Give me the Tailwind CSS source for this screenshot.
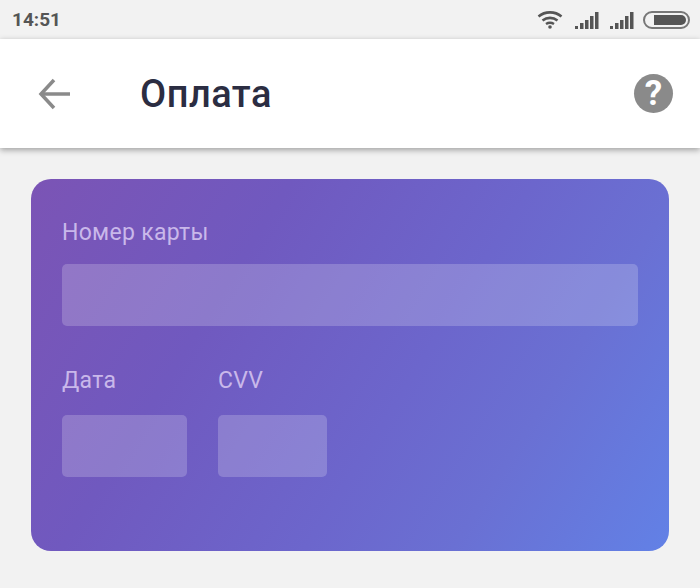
<!DOCTYPE html>
<html lang="ru">
<head>
    <meta charset="UTF-8">
    <title>Оплата</title>
    <script src="https://cdn.jsdelivr.net/npm/@tailwindcss/browser@4"></script>
</head>
<body class="bg-[#f2f2f2] font-['Roboto',sans-serif] w-[700px] h-[588px] overflow-hidden">
    <!-- status bar -->
    <div class="h-[39px] flex items-center justify-between pl-3 pr-[10px] text-[#555]">
        <span class="text-[19px] font-bold leading-none">14:51</span>
        <div class="flex items-center">
            <svg width="26" height="19" viewBox="0 0 26 19" fill="none" stroke="#555" stroke-width="2.6" class="mr-[12px]">
                <path d="M1.5 6.5C8 1 18 1 24.5 6.5"/>
                <path d="M5.5 10.5C10 7 16 7 20.5 10.5"/>
                <path d="M9 14C11.5 12.5 14.5 12.5 17 14"/>
                <circle cx="13" cy="17" r="1.8" fill="#555" stroke="none"/>
            </svg>
            <svg width="24" height="18" viewBox="0 0 24 18" fill="#555" class="mr-[11px]">
                <rect x="0" y="15" width="3" height="3"/>
                <rect x="5" y="12" width="3.5" height="6"/>
                <rect x="10" y="9" width="3.5" height="9"/>
                <rect x="15" y="5" width="3.5" height="13"/>
                <rect x="20" y="1" width="3.5" height="17"/>
            </svg>
            <svg width="24" height="18" viewBox="0 0 24 18" fill="#555" class="mr-[9px]">
                <rect x="0" y="15" width="3" height="3"/>
                <rect x="5" y="12" width="3.5" height="6"/>
                <rect x="10" y="9" width="3.5" height="9"/>
                <rect x="15" y="5" width="3.5" height="13"/>
                <rect x="20" y="1" width="3.5" height="17"/>
            </svg>
            <div class="w-[47px] h-[18px] rounded-full border-2 border-[#777] p-[2px] flex justify-end">
                <div class="w-[32px] h-full rounded-r-full rounded-l-[2px] bg-[#555]"></div>
            </div>
        </div>
    </div>

    <!-- header -->
    <header class="h-[109px] bg-white shadow-[0_2px_6px_rgba(0,0,0,0.35)] flex items-center pl-[38px] pr-[27px]">
        <svg width="33" height="32" viewBox="0 0 33 32" fill="none" stroke="#8a8a8a" stroke-width="3.5">
            <path d="M32 16H3"/>
            <path d="M16 2L3 16L16 30"/>
        </svg>
        <h1 class="ml-[69px] text-[#2b2d42] text-[38px] font-medium leading-none tracking-[0.5px]">Оплата</h1>
        <div class="ml-auto w-[39px] h-[39px] rounded-full bg-[#8a8a8a] flex items-center justify-center text-white text-[35px] font-bold leading-none">?</div>
    </header>

    <!-- card -->
    <main class="px-[31px] pt-[31px]">
        <div class="h-[372px] rounded-[20px] bg-[linear-gradient(122deg,#7b54b5_0%,#7059bf_30%,#6c66cc_58%,#6a70d3_75%,#6281e6_100%)] pl-[31px] pr-[31px] pt-[41px]">
            <label class="block text-[23px] leading-[26px] text-[#c9b8ea] tracking-[0.3px]">Номер карты</label>
            <div class="mt-[18px] h-[62px] rounded-[5px] bg-white/20"></div>
            <div class="flex gap-[31px] mt-[42px]">
                <div class="w-[125px]">
                    <label class="block text-[23px] leading-[26px] text-[#c9b8ea] tracking-[0.3px]">Дата</label>
                    <div class="mt-[21px] h-[62px] rounded-[5px] bg-white/20"></div>
                </div>
                <div class="w-[109px]">
                    <label class="block text-[23px] leading-[26px] text-[#c9b8ea] tracking-[0.3px]">CVV</label>
                    <div class="mt-[21px] h-[62px] rounded-[5px] bg-white/20"></div>
                </div>
            </div>
        </div>
    </main>
</body>
</html>
